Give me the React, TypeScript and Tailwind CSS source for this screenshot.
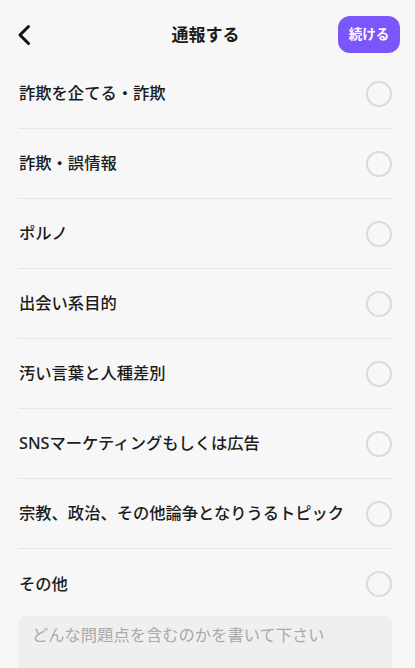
import { useState } from "react";

const reasons = [
  "詐欺を企てる・詐欺",
  "詐欺・誤情報",
  "ポルノ",
  "出会い系目的",
  "汚い言葉と人種差別",
  "SNSマーケティングもしくは広告",
  "宗教、政治、その他論争となりうるトピック",
  "その他",
];

export default function App() {
  const [selected, setSelected] = useState<number | null>(null);

  return (
    <div
      className="min-h-screen w-full bg-[#f7f7f7] text-[#1c1c1c]"
      style={{ fontFamily: '"Noto Sans", "Noto Sans CJK JP", sans-serif' }}
    >
      {/* Header */}
      <div className="h-[59px] flex items-center justify-between pl-[13px] pr-[15px] pt-[10px]">
        <button className="w-[24px] h-[24px] flex items-center justify-center">
          <svg width="18" height="24" viewBox="0 0 18 24" fill="none">
            <path
              d="M12.5 3.5L4 12L12.5 20.5"
              stroke="#111"
              strokeWidth="3"
              strokeLinecap="round"
              strokeLinejoin="round"
            />
          </svg>
        </button>
        <h1 className="text-[17px] font-semibold ml-[36px]">通報する</h1>
        <button className="h-[37px] w-[62px] rounded-[12px] bg-[#7b57fb] text-white text-[13.5px] font-semibold">
          続ける
        </button>
      </div>

      {/* Reasons */}
      <div className="pl-[18px] pr-[23px]">
        {reasons.map((r, i) => (
          <div
            key={r}
            onClick={() => setSelected(i)}
            className={
              "h-[70px] flex items-center justify-between pl-[1px] " +
              (i < reasons.length - 1 ? "border-b border-[#e6e6e6]" : "")
            }
          >
            <span className="text-[16.3px] font-medium">{r}</span>
            <span
              className={
                "w-[26px] h-[26px] rounded-full border-2 " +
                (selected === i ? "border-[#7b57fb] bg-[#7b57fb]" : "border-[#dadada]")
              }
            />
          </div>
        ))}

        <textarea
          placeholder="どんな問題点を含むのかを書いて下さい"
          className="mt-[-3px] w-full h-[110px] rounded-[8px] bg-[#efefef] px-[14px] py-[7px] text-[16.3px] placeholder:text-[#a9a9a9] outline-none resize-none"
        />
      </div>
    </div>
  );
}
